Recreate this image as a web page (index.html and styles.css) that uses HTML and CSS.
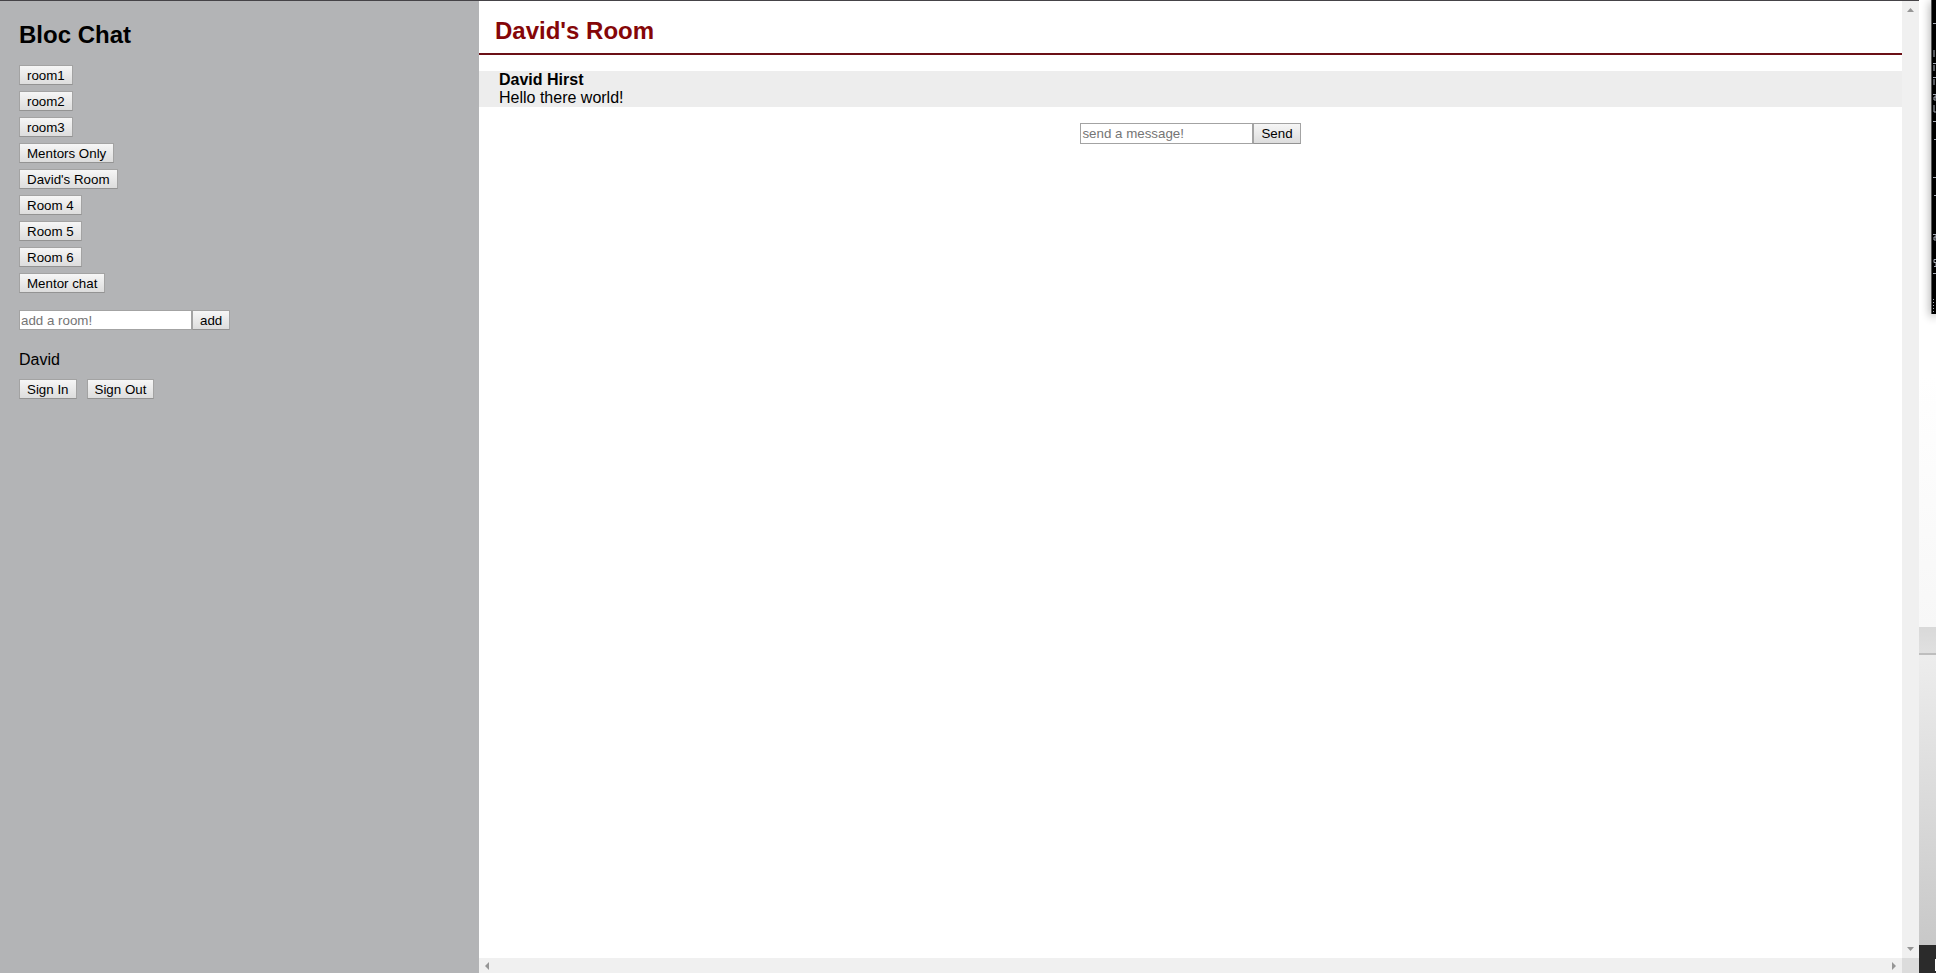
FILE: index.html
```html
<!DOCTYPE html>
<html lang="en">
<head>
<meta charset="utf-8">
<title>Bloc Chat</title>
<link rel="stylesheet" href="styles.css">
</head>
<body>
<div class="app">
  <aside class="sidebar">
    <h1 class="title">Bloc Chat</h1>
    <nav class="rooms" aria-label="Rooms">
      <button class="btn" type="button">room1</button>
      <button class="btn" type="button">room2</button>
      <button class="btn" type="button">room3</button>
      <button class="btn" type="button">Mentors Only</button>
      <button class="btn" type="button">David's Room</button>
      <button class="btn" type="button">Room 4</button>
      <button class="btn" type="button">Room 5</button>
      <button class="btn" type="button">Room 6</button>
      <button class="btn" type="button">Mentor chat</button>
    </nav>
    <form class="form">
      <input class="field field-room" type="text" placeholder="add a room!" aria-label="Room name">
      <button class="btn" type="submit">add</button>
    </form>
    <div class="user">David</div>
    <div class="session">
      <button class="btn" type="button">Sign In</button>
      <button class="btn" type="button">Sign Out</button>
    </div>
  </aside>
  <div class="pane">
    <main class="room">
      <h2 class="room-title">David's Room</h2>
      <div class="message">
        <div class="author">David Hirst</div>
        <div>Hello there world!</div>
      </div>
      <form class="form form-send">
        <input class="field" type="text" placeholder="send a message!" aria-label="Message">
        <button class="btn" type="submit">Send</button>
      </form>
    </main>
    <div class="bar bar-y">
      <svg width="17" height="17" viewBox="0 0 17 17"><path d="M5 11h7L8.500 7z"/></svg>
      <svg width="17" height="17" viewBox="0 0 17 17"><path d="M5 6h7L8.500 10z"/></svg>
    </div>
    <div class="bar bar-x">
      <svg width="17" height="15" viewBox="0 0 17 15"><path d="M10 4v8L6 8z"/></svg>
      <svg width="17" height="15" viewBox="0 0 17 15"><path d="M7 4v8l4-4z"/></svg>
    </div>
    <div class="corner"></div>
  </div>
  <div class="desktop">
    <div class="console">
      <svg width="4" height="313" viewBox="0 0 4 313" fill="none" stroke="#a9adb8">
        <path d="M1 23.500h3M2 50v7M1 63.500h3M2 65v6M1 77.500h3M2 79v6M1 94.500h3M4 94v5M4 97H2v3h2M2 105v7h2M1 121.500h3M2 139.500h2M1 177.500h3M2 195.500h2M1 234.500h3M4 234v5M4 237H2v3h2M4 259.500H2v3h2v4H2M1 273.500h3"/>
        <path d="M1.500 299v13" stroke-dasharray="1 2"/>
      </svg>
    </div>
    <div class="upper"></div>
    <div class="ledge"></div>
    <div class="lower"></div>
    <div class="taskbar"></div>
  </div>
</div>
</body>
</html>
```
FILE: styles.css
```css
* {
  box-sizing: border-box;
}

body {
  margin: 0;
  font-family: "Liberation Sans", Arial, sans-serif;
  font-size: 16px;
  line-height: 18px;
  color: #000;
  background: #fff;
}

.app {
  display: grid;
  grid-template-columns: calc(25% - 5px) 1fr 17px;
  height: 100vh;
}

.sidebar,
.pane {
  border-top: 1px solid #454347;
}

.sidebar {
  padding: 20px 19px;
  background: #b3b4b6;
}

.title,
.room-title {
  margin: 0;
  font-size: 24px;
  line-height: 28px;
}

.rooms {
  display: flex;
  flex-direction: column;
  align-items: flex-start;
  gap: 6px;
  margin: 16px 0 17px;
}

.btn {
  height: 21px;
  padding: 0 7px;
  border: 1px solid #a3a3a3;
  border-bottom-color: #939393;
  background: linear-gradient(#f6f6f6, #dddddd);
  color: #000;
  font-family: inherit;
}

.sidebar .btn {
  height: 20px;
}

.form {
  display: flex;
}

.field {
  width: 173px;
  height: 21px;
  padding: 1px;
  border: 1px solid #a3a3a3;
  background: #fff;
  font-family: inherit;
}

.field-room {
  height: 20px;
}

.field::placeholder {
  color: #757575;
}

.user {
  margin: 21px 0 10px;
}

.session {
  display: flex;
  gap: 10px;
}

.pane {
  display: grid;
  grid-template: 1fr 15px / 1fr 17px;
}

.room-title {
  padding: 16px 16px 8px;
  border-bottom: 2px solid #6b1016;
  color: #850608;
}

.message {
  margin: 16px 0;
  padding: 0 20px;
  background: #ededed;
}

.author {
  font-weight: bold;
}

.form-send {
  justify-content: center;
}

.bar {
  display: flex;
  justify-content: space-between;
  background: #f0f0f0;
  fill: #969696;
}

.bar-y {
  flex-direction: column;
}

.corner {
  background: #dcdcdc;
}

.desktop {
  position: relative;
  display: flex;
  flex-direction: column;
}

.console {
  position: absolute;
  top: 0;
  right: 0;
  width: 5px;
  height: 314px;
  background: #000;
  box-shadow: 0 2px 10px #888;
  border-left: 1px solid #555;
}

.console svg {
  display: block;
}

.upper {
  flex: 627 0 0;
  background: linear-gradient(#fff 60%, #f7f7f7);
}

.ledge {
  height: 28px;
  background: linear-gradient(#d9d9d9, #e0e0e0);
  border-bottom: 2px solid #bebebe;
}

.lower {
  flex: 290 0 0;
  background: linear-gradient(#ededed, #c8c8c8);
}

.taskbar {
  height: 28px;
  background: linear-gradient(#fff, #fff) right 14px / 1px 12px no-repeat #2b2b2b;
}
```
